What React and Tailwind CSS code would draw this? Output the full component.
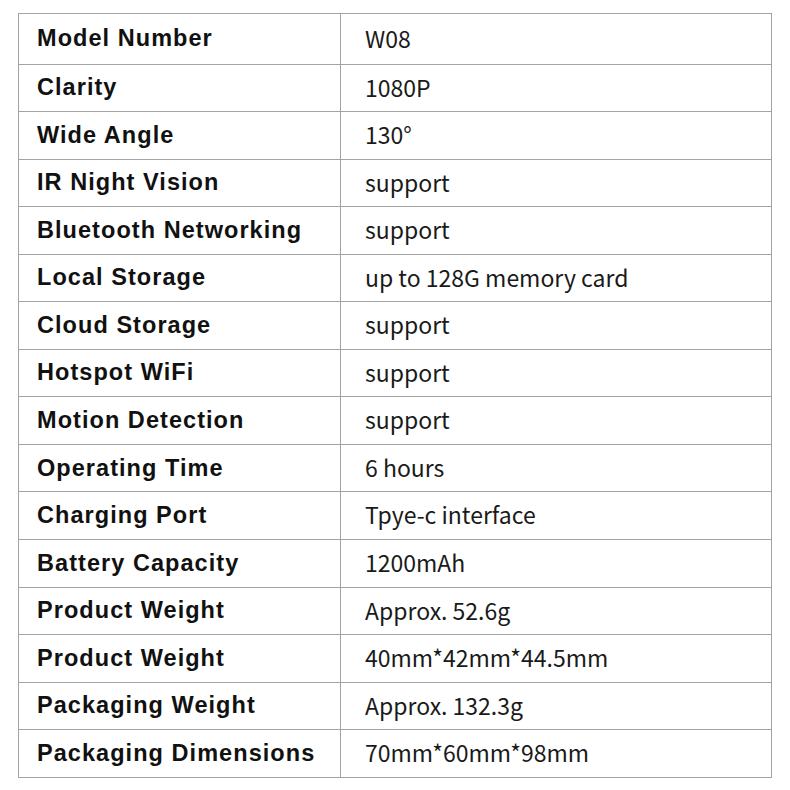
const specs = [
  ["Model Number", "W08"],
  ["Clarity", "1080P"],
  ["Wide Angle", "130°"],
  ["IR Night Vision", "support"],
  ["Bluetooth Networking", "support"],
  ["Local Storage", "up to 128G memory card"],
  ["Cloud Storage", "support"],
  ["Hotspot WiFi", "support"],
  ["Motion Detection", "support"],
  ["Operating Time", "6 hours"],
  ["Charging Port", "Tpye-c interface"],
  ["Battery Capacity", "1200mAh"],
  ["Product Weight", "Approx. 52.6g"],
  ["Product Weight", "40mm*42mm*44.5mm"],
  ["Packaging Weight", "Approx. 132.3g"],
  ["Packaging Dimensions", "70mm*60mm*98mm"],
];

export default function App() {
  return (
    <div className="w-[790px] h-[790px] bg-white pt-[13px] pl-[18px]">
      <div className="w-[754px] border border-[#a3a3a3] flex flex-col">
        {specs.map(([label, value], i) => (
          <div
            key={i}
            className={`flex ${i === 0 ? "h-[49.5px]" : "h-[47.55px]"} ${i > 0 ? "border-t border-[#a3a3a3]" : ""}`}
          >
            <div className="w-[322px] shrink-0 border-r border-[#a3a3a3] flex items-center pl-[18px] font-['Liberation_Sans',Arial,sans-serif] font-bold text-[23.5px] tracking-[1.05px] text-[#111]">
              {label}
            </div>
            <div className="flex-1 flex items-center pl-[24px] pb-[2px] font-['Noto_Sans_CJK_SC','Noto_Sans',sans-serif] text-[23px] text-[#1a1a1a]">
              {value}
            </div>
          </div>
        ))}
      </div>
    </div>
  );
}
